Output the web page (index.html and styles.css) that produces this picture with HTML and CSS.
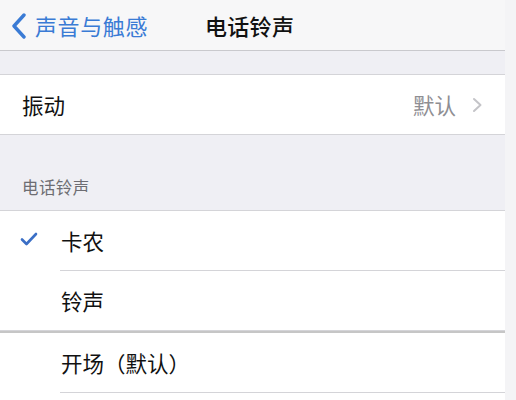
FILE: index.html
```html
<!DOCTYPE html>
<html lang="zh">
<head>
<meta charset="utf-8">
<link rel="stylesheet" href="styles.css">
</head>
<body>
<div class="screen">
  <div class="main">
    <header class="nav">
      <div class="back">
        <svg class="back-icon" width="18" height="26" viewBox="0 0 18 26"><path d="M14 2 L4 13 L14 24" fill="none" stroke="#3a7bd5" stroke-width="3.4" stroke-linecap="round" stroke-linejoin="round"/></svg>
        <span>声音与触感</span>
      </div>
      <div class="title">电话铃声</div>
    </header>
    <div class="gap"></div>
    <div class="group">
      <div class="row">
        <span class="label">振动</span>
        <span class="detail">默认
          <svg class="chev" width="11" height="16" viewBox="0 0 11 16"><path d="M2 2 L8.5 8 L2 14" fill="none" stroke="#c4c4c8" stroke-width="2" stroke-linecap="round" stroke-linejoin="round"/></svg>
        </span>
      </div>
    </div>
    <div class="section-head">电话铃声</div>
    <div class="group">
      <div class="row item">
        <svg class="check" width="18" height="14" viewBox="0 0 18 14"><path d="M2 7.5 L6.5 12 L16 2" fill="none" stroke="#3b6fc6" stroke-width="2.6" stroke-linecap="round" stroke-linejoin="round"/></svg>
        <span class="label">卡农</span>
      </div>
      <div class="row item">
        <span class="label">铃声</span>
      </div>
    </div>
    <div class="group thick">
      <div class="row item">
        <span class="label">开场（默认）</span>
      </div>
      <div class="row item last"></div>
    </div>
  </div>
  <div class="strip"></div>
</div>
</body>
</html>
```

FILE: styles.css
```css
html, body {
  margin: 0;
  padding: 0;
  width: 516px;
  height: 400px;
  overflow: hidden;
  font-family: "Noto Sans CJK SC", "Noto Sans", sans-serif;
}
.screen {
  display: flex;
  height: 400px;
  background: #efeff4;
}
.main {
  width: 505px;
  display: flex;
  flex-direction: column;
  overflow: hidden;
}
.main > * {
  flex-shrink: 0;
}
.strip {
  flex: 1;
  background: #f4f4f6;
}
.nav {
  height: 51px;
  box-sizing: border-box;
  border-bottom: 1px solid #c9c9cd;
  background: #f7f7f8;
  display: flex;
  align-items: center;
}
.back {
  display: flex;
  align-items: center;
  color: #3a7bd5;
  font-size: 22px;
  letter-spacing: 0.6px;
  padding-left: 10px;
}
.back-icon {
  margin-right: 7px;
  margin-top: 1px;
}
.title {
  margin-left: 57px;
  font-size: 22px;
  font-weight: 500;
  color: #111;
  letter-spacing: 0.3px;
}
.gap {
  height: 23px;
}
.group {
  background: #fff;
  border-top: 1px solid #d4d4d8;
  border-bottom: 1px solid #d4d4d8;
}
.row {
  height: 59px;
  display: flex;
  align-items: center;
  padding-left: 22px;
  padding-right: 22px;
  position: relative;
}
.label {
  font-size: 21.5px;
  color: #111;
}
.detail {
  margin-left: auto;
  display: flex;
  align-items: center;
  font-size: 21.5px;
  color: #8e8e93;
}
.chev {
  margin-left: 16px;
}
.section-head {
  height: 75px;
  box-sizing: border-box;
  padding: 40px 0 0 22px;
  font-size: 16.5px;
  color: #6d6d72;
  letter-spacing: 0.4px;
}
.item {
  padding-left: 61px;
}
.item + .item {
  border-top: 1px solid #d4d4d8;
  margin-left: 60px;
  padding-left: 1px;
}
.check {
  position: absolute;
  left: 20px;
  top: 21px;
}
.thick {
  border-top: 2px solid #c6c6c6;
  border-bottom: none;
}
.last {
  height: 20px;
}
```
